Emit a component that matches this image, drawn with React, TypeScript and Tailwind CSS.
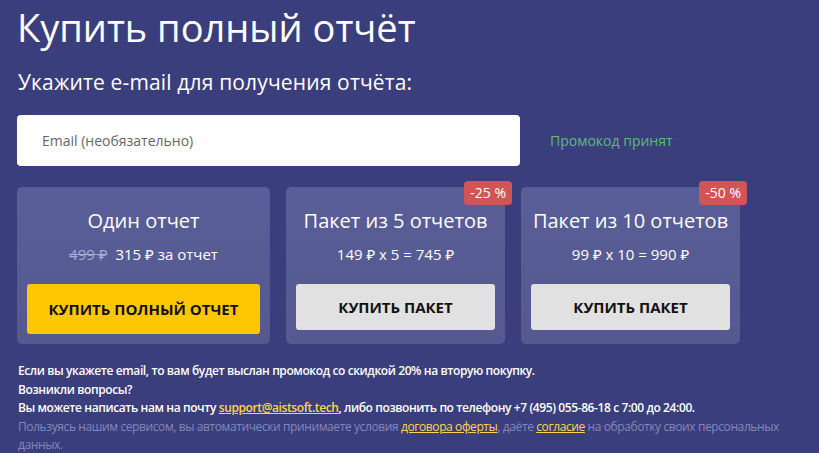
import React from "react";

const sans = "font-['Open_Sans','Noto_Sans',sans-serif]";

type Plan = {
  title: string;
  price: React.ReactNode;
  button: string;
  primary?: boolean;
  badge?: string;
  wide?: boolean;
};

const plans: Plan[] = [
  {
    title: "Один отчет",
    price: (
      <>
        <span className="mr-2 text-[#a9abd0] line-through">499 ₽</span>
        315 ₽ за отчет
      </>
    ),
    button: "Купить полный отчет",
    primary: true,
    wide: true,
  },
  {
    title: "Пакет из 5 отчетов",
    price: "149 ₽ x 5 = 745 ₽",
    button: "Купить пакет",
    badge: "-25 %",
  },
  {
    title: "Пакет из 10 отчетов",
    price: "99 ₽ x 10 = 990 ₽",
    button: "Купить пакет",
    badge: "-50 %",
  },
];

function PlanCard({ plan }: { plan: Plan }) {
  return (
    <div
      className={`relative flex flex-col items-center rounded-[5px] bg-gradient-to-b from-[#5a5e98] to-[#555990] px-[10px] pt-[20px] pb-[10px] ${
        plan.wide ? "w-[253px]" : "w-[219px]"
      }`}
    >
      {plan.badge && (
        <span className="absolute -top-[6px] -right-[7px] rounded-[4px] bg-[#d25556] px-[6px] py-[2px] text-[14px] leading-[20px] text-white">
          {plan.badge}
        </span>
      )}
      <div className="text-[20px] leading-[28px] text-white">{plan.title}</div>
      <div className="mt-[8px] text-[15px] leading-[22px] text-white">
        {plan.price}
      </div>
      <button
        className={`mt-[19px] flex w-full items-center justify-center rounded-[3px] text-[15px] font-bold uppercase text-[#111] ${
          plan.primary ? "h-[50px] bg-[#ffc700]" : "h-[46px] bg-[#e1e1e1]"
        }`}
      >
        {plan.button}
      </button>
    </div>
  );
}

export default function App() {
  return (
    <div className={`h-[453px] w-[819px] overflow-hidden bg-[#3b3e7c] px-[17px] ${sans}`}>
      <h1 className="pt-[4px] text-[38px] leading-[46px] font-normal text-white">
        Купить полный отчёт
      </h1>
      <p className="mt-[18px] pl-[1px] text-[21px] leading-[28px] tracking-[0.15px] text-white">
        Укажите e-mail для получения отчёта:
      </p>

      <div className="mt-[19px] flex items-center">
        <input
          type="text"
          placeholder="Email (необязательно)"
          className="h-[51px] w-[503px] rounded-[4px] bg-white px-[25px] text-[14px] text-[#333] placeholder:text-[#666] outline-none"
        />
        <span className="ml-[30px] text-[14px] text-[#5dbb7c]">Промокод принят</span>
      </div>

      <div className="mt-[21px] flex gap-[16px]">
        {plans.map((p) => (
          <PlanCard key={p.title} plan={p} />
        ))}
      </div>

      <div className="mt-[18px] pl-[1px] text-[12px] leading-[18.5px] tracking-[-0.4px]">
        <p className="font-semibold text-white">
          Если вы укажете email, то вам будет выслан промокод со скидкой 20% на вторую покупку.
        </p>
        <p className="font-semibold text-white">Возникли вопросы?</p>
        <p className="font-semibold text-white">
          Вы можете написать нам на почту{" "}
          <a className="text-[#ffd54a] underline">support@aistsoft.tech</a>, либо позвонить по
          телефону +7 (495) 055-86-18 с 7:00 до 24:00.
        </p>
        <p className="pr-[2px] text-[#8487bb]">
          Пользуясь нашим сервисом, вы автоматически принимаете условия{" "}
          <a className="text-[#ffd54a] underline">договора оферты</a>, даёте{" "}
          <a className="text-[#ffd54a] underline">согласие</a> на обработку своих персональных
          данных.
        </p>
      </div>
    </div>
  );
}
